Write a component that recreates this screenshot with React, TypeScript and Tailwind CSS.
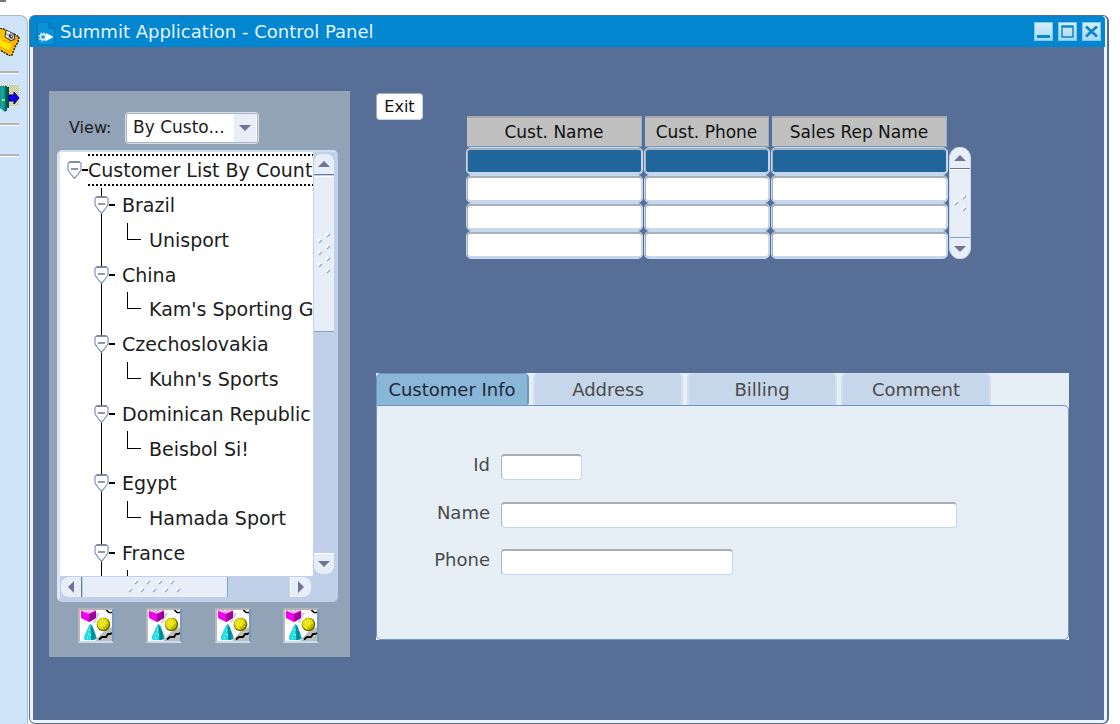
import { useState } from "react";

type Country = { name: string; customer: string };

const COUNTRIES: Country[] = [
  { name: "Brazil", customer: "Unisport" },
  { name: "China", customer: "Kam's Sporting G" },
  { name: "Czechoslovakia", customer: "Kuhn's Sports" },
  { name: "Dominican Republic", customer: "Beisbol Si!" },
  { name: "Egypt", customer: "Hamada Sport" },
  { name: "France", customer: "" },
];

const COLUMNS = ["Cust. Name", "Cust. Phone", "Sales Rep Name"];
const TABS = ["Customer Info", "Address", "Billing", "Comment"];

function FloppyIcon() {
  return (
    <svg width="20" height="28" viewBox="0 0 20 28" aria-hidden="true">
      <path d="M0 0 6 2 19 9l-1 5-3 5-3 8-2 1L0 22z" fill="#ffc400" />
      <path d="M0 11 9 14l4 4-3 6L0 18z" fill="#ffe600" />
      <path d="M0 19 10 24l3-8M2 12l9 3M13 18l4-8" fill="none" stroke="#ff9d00" strokeWidth="1.500" />
      <path d="M0 0 6 2M14 6l5 3-1 5-3 5-3 8-2 1L0 22" fill="none" stroke="#241a00" strokeWidth="1.500" strokeDasharray="2 1" />
      <path d="m6 2 8 4 1 5-4 2-6-4z" fill="#bcbcbc" stroke="#333" strokeWidth="1" />
      <path d="m9 6 4 2-1 3-3-2z" fill="#333" />
      <path d="m7 4 3 1M6 8l2 1M11 8l1 1" stroke="#fff" strokeWidth="1.500" />
    </svg>
  );
}

function DoorIcon() {
  return (
    <svg width="20" height="30" viewBox="0 0 20 30" aria-hidden="true">
      <defs>
        <pattern id="dither" width="2" height="2" patternUnits="userSpaceOnUse">
          <rect width="2" height="2" fill="#e2e6c4" />
          <rect width="1" height="1" fill="#bfc28c" />
          <rect x="1" y="1" width="1" height="1" fill="#bfc28c" />
        </pattern>
      </defs>
      <rect x="0" y="1" width="19" height="21" fill="url(#dither)" />
      <path d="M7 3h2v21H7z" fill="#0d4a4a" />
      <path d="M0 2h6l1 2v22l-2 2-5-4z" fill="#12958f" />
      <path d="M5 2h2v25H5z" fill="#06605e" />
      <path d="M2 3v21" stroke="#2bb5ad" />
      <path d="M2 16h3" stroke="#8df070" strokeWidth="2" />
      <path d="M9 11h5V8l5 6-5 6v-3H9z" fill="#1200e8" stroke="#06006e" strokeWidth="1" />
    </svg>
  );
}

function AppIcon() {
  return (
    <svg width="18" height="23" viewBox="0 0 18 23" aria-hidden="true">
      <path d="M.5.500h11l6 6V22.500H.5z" fill="#0a93d6" stroke="#0673b4" />
      <path d="M11.500.500v6h6z" fill="#0286d0" stroke="#0673b4" />
      <circle cx="6" cy="15" r="2.600" fill="none" stroke="#d9f1fd" strokeWidth="1.600" />
      <circle cx="6" cy="15" r="3.900" fill="none" stroke="#d9f1fd" strokeWidth="1.400" strokeDasharray="1.500 1.560" />
      <path d="m9 11 7.500 4L9 19z" fill="#fff" />
    </svg>
  );
}

function ShapesIcon() {
  return (
    <svg width="32" height="31" viewBox="0 0 32 31" aria-hidden="true">
      <rect width="32" height="31" fill="#fff" />
      <path d="M15 31 23 22l9-5v14z" fill="#bdbdbd" />
      <path d="M16 3h4l-5 10-3-1 4-3z" fill="#d2d2d2" />
      <path d="M1 0h15v8l-7 4-8-4z" fill="#f000f0" />
      <path d="M1 0h15v1L9 4 1 1z" fill="#ff8cff" />
      <path d="M9 4 16 1v7l-7 4z" fill="#9c0098" />
      <path d="M3 .500h2M7 .500h2M11 .500h2M5 1.500h2M9 1.500h2" stroke="#fff" />
      <path d="M26 .500h1l2 2h3" fill="none" stroke="#000" strokeWidth="1.500" />
      <circle cx="23.500" cy="14.500" r="6.800" fill="#6b6800" />
      <circle cx="22.900" cy="13.900" r="5.800" fill="#e6e000" />
      <path d="M20 12h1M22 11h1M21 14h1M24 12h1M23 14h1M20 16h1" stroke="#fff" strokeWidth="1.200" />
      <path d="M25 17h2M23 18h2M26 15h2" stroke="#8d8900" />
      <path d="m10.500 14 2 2 4 11v2l-3 1H6l-2-1v-2l5-11z" fill="#059da5" />
      <path d="m10.500 14-2 3L4 27v2l2 1h5z" fill="#21dfe6" />
      <path d="M11.500 18v3M13 21v8" stroke="#00717a" />
      <path d="M9 20h1M8 24h1M10 25h1M7 28h1" stroke="#fff" />
      <path d="M19 29.500 22 27h4l2-3h2l2-1" fill="none" stroke="#000" strokeWidth="1.800" />
    </svg>
  );
}

function NodeHandle() {
  return (
    <svg width="15" height="18" viewBox="0 0 15 18" className="shrink-0" aria-hidden="true">
      <path d="M2.500 1h10l1.500 1.500v6.500L10.500 14l-3 3.500-3-3.500L1 9V2.500z" fill="#fff" stroke="#7f93bd" strokeWidth="1.200" />
      <path d="M2.500 1h10M4 8h7" stroke="#73738c" strokeWidth="1.300" fill="none" />
    </svg>
  );
}

function Arrow({ dir }: { dir: "up" | "down" | "left" | "right" }) {
  const shapes = {
    up: "M0 9 6 3l6 6z",
    down: "M0 3h12L6 9z",
    left: "M9 0v12L3 6z",
    right: "M3 0v12l6-6z",
  };
  return (
    <svg width="12" height="12" viewBox="0 0 12 12" aria-hidden="true">
      <path d={shapes[dir]} fill="#717594" />
    </svg>
  );
}

function Grip({ points, width, height }: { points: [number, number][]; width: number; height: number }) {
  return (
    <svg width={width} height={height} viewBox={`0 0 ${width} ${height}`} aria-hidden="true">
      {points.map(([x, y]) => (
        <g key={`${x}-${y}`}>
          <path d={`M${x} ${y + 2.5} l2.5 -2.5`} stroke="#fff" strokeWidth="2.500" />
          <path d={`M${x + 1} ${y + 4} l3 -3`} stroke="#8aabd0" strokeWidth="1.200" />
        </g>
      ))}
    </svg>
  );
}

const TREE_GRIP: [number, number][] = [
  [8, 0], [0, 6], [8, 12], [0, 18], [8, 24], [0, 30], [8, 36],
];
const TREE_GRIP_WIDE: [number, number][] = [
  [6, 0], [18, 0], [30, 0], [42, 0], [0, 8], [12, 8], [24, 8], [36, 8], [48, 8],
];
const TABLE_GRIP: [number, number][] = [[8, 0], [0, 6], [8, 12]];

function Toolbar() {
  return (
    <nav aria-label="Toolbar" className="flex w-7 shrink-0 flex-col rounded-tr-lg border-t border-r border-[#a9bacb] bg-[#cfe4f8] pt-3">
      <button type="button" aria-label="Save" className="h-7 w-5">
        <FloppyIcon />
      </button>
      <hr className="mt-[15px] h-[3px] w-[19px] border-t-2 border-[#b4b4b4] bg-white" />
      <button type="button" aria-label="Exit form" className="mt-[10px] h-[30px] w-5">
        <DoorIcon />
      </button>
      <hr className="mt-[9px] h-[3px] w-[19px] border-t-2 border-[#b4b4b4] bg-white" />
      <hr className="mt-7 h-[3px] w-[19px] border-t-2 border-[#b4b4b4] bg-white" />
    </nav>
  );
}

function TitleBar() {
  const button = "flex h-[19px] w-[19px] items-center justify-center border border-[#7cc8f0] bg-linear-to-b from-[#d4effc] to-[#a5d9f5]";
  return (
    <header className="mr-[2px] flex h-[31px] items-center rounded-t-[4px] bg-[#0286d0] pr-1 pl-[7px]">
      <span className="pt-1">
        <AppIcon />
      </span>
      <h1 className="ml-[5px] flex-1 text-[18px] leading-6 text-[#e4f4fd]">Summit Application - Control Panel</h1>
      <div className="flex gap-[5px]">
        <button type="button" aria-label="Minimize" className={button}>
          <svg width="13" height="13" viewBox="0 0 13 13"><path d="M0 11.500h13" stroke="#0d86c8" strokeWidth="3" /></svg>
        </button>
        <button type="button" aria-label="Maximize" className={button}>
          <svg width="13" height="13" viewBox="0 0 13 13"><path d="M1 1h11v11H1zM1 2h11" fill="none" stroke="#0d86c8" strokeWidth="1.500" /></svg>
        </button>
        <button type="button" aria-label="Close" className={button}>
          <svg width="13" height="13" viewBox="0 0 13 13"><path d="m1 1.500 11 10m0-10-11 10" stroke="#0d86c8" strokeWidth="2.800" /></svg>
        </button>
      </div>
    </header>
  );
}

function CustomerTree() {
  return (
    <div className="mt-[6px] mr-3 ml-2 rounded-[5px] border-t-2 border-r border-b-4 border-l-[3px] border-[#bfd0e8] border-t-[#cfdff2] border-l-[#dce7f5] bg-[#bfd0e8]">
      <div className="flex h-[424px]">
        <div className="min-w-0 flex-1 overflow-hidden bg-white pt-px">
          <ul role="tree" className="grid h-[452px] grid-rows-[repeat(13,1fr)] text-[19px] whitespace-nowrap text-[#1c1c1c]">
            <li role="treeitem" className="flex min-w-0 items-center pl-[7px]">
              <NodeHandle />
              <span className="w-[6px] shrink-0 border-t-2 border-black" />
              <span className="flex-1 border-y-2 border-dotted border-black leading-7">Customer List By Count</span>
            </li>
            {COUNTRIES.map((country) => (
              <li key={country.name} role="treeitem" className="row-span-2 grid grid-rows-2">
                <div className="flex">
                  <div className="relative ml-[34px] flex w-[28px] items-center">
                    <span className="absolute top-0 left-[7px] h-[200%] w-0 border-l border-black" />
                    <span className="relative flex items-center">
                      <NodeHandle />
                      <span className="w-[6px] border-t-2 border-black" />
                    </span>
                  </div>
                  <span className="self-center leading-7">{country.name}</span>
                </div>
                <div className="flex pl-[67px]">
                  <span className="h-1/2 w-[14px] border-b border-l border-black" />
                  <span className="ml-2 self-center leading-7">{country.customer}</span>
                </div>
              </li>
            ))}
          </ul>
        </div>
        <div className="flex w-[24px] flex-col pt-[2px] pr-[3px] pl-[1px]">
          <button type="button" aria-label="Scroll up" className="flex h-[21px] items-center justify-center rounded-t-lg border-b border-[#717594] bg-[#e7eef7]">
            <Arrow dir="up" />
          </button>
          <div className="mt-px flex h-[156px] items-center justify-center border-t border-b border-t-white border-b-[#7fa3cc] bg-[#e7eef7]">
            <Grip points={TREE_GRIP} width={13} height={42} />
          </div>
          <button type="button" aria-label="Scroll down" className="mt-auto mb-[2px] flex h-[21px] items-center justify-center rounded-b-lg border-t border-white bg-[#e7eef7]">
            <Arrow dir="down" />
          </button>
        </div>
      </div>
      <div className="flex h-[22px] pt-px pr-[26px] pb-px pl-px">
        <button type="button" aria-label="Scroll left" className="flex w-[21px] items-center justify-center rounded-l-lg border-r border-[#717594] bg-[#e7eef7]">
          <Arrow dir="left" />
        </button>
        <div className="ml-px flex w-[145px] items-center justify-center border-r border-[#7fa3cc] bg-[#e7eef7]">
          <Grip points={TREE_GRIP_WIDE} width={54} height={14} />
        </div>
        <button type="button" aria-label="Scroll right" className="ml-auto flex w-[21px] items-center justify-center rounded-r-lg border-l border-white bg-[#e7eef7]">
          <Arrow dir="right" />
        </button>
      </div>
    </div>
  );
}

function Sidebar() {
  return (
    <aside className="w-[301px] shrink-0 bg-[#92a3b8] pt-[21px] pb-[14px]">
      <div className="flex items-center pl-5">
        <label htmlFor="view" className="w-14 text-[16px] text-[#1c1c1c]">View:</label>
        <div className="relative">
          <select
            id="view"
            className="h-8 w-[134px] appearance-none rounded border-2 border-[#aeb3ba] bg-white pl-[6px] text-[17px] text-[#1c1c1c] outline-1 -outline-offset-1 outline-[#cfe0f2]"
          >
            <option>By Custo...</option>
          </select>
          <span className="pointer-events-none absolute top-[2px] right-[3px] bottom-[2px] flex w-[22px] items-center justify-center bg-[#e7eef7]">
            <Arrow dir="down" />
          </span>
        </div>
      </div>
      <CustomerTree />
      <div className="mt-[6px] flex justify-between pr-[31px] pl-[29px]">
        {[1, 2, 3, 4].map((n) => (
          <button
            key={n}
            type="button"
            aria-label={`Action ${n}`}
            className="h-[35px] w-[36px] border-2 border-t-[#b3b3b3] border-r-[#7899bf] border-b-[#c9dbef] border-l-[#b8b8b8]"
          >
            <ShapesIcon />
          </button>
        ))}
      </div>
    </aside>
  );
}

function CustomerTable() {
  return (
    <div className="flex items-end">
      <table className="border-separate border-spacing-0">
        <thead>
          <tr>
            {COLUMNS.map((column, i) => (
              <th
                key={column}
                scope="col"
                className={`${i === 1 ? "w-[127px]" : "w-[178px]"} h-[31px] p-0 pr-[2px] pl-px text-[17px] leading-7 font-normal whitespace-nowrap text-[#111]`}
              >
                <div className="border-t-2 border-r border-b border-t-[#a8a8a8] border-r-[#8fb0d4] border-b-[#7899bf] bg-[#c0c0c0]">{column}</div>
              </th>
            ))}
          </tr>
        </thead>
        <tbody>
          {[0, 1, 2, 3].map((row) => (
            <tr key={row}>
              {COLUMNS.map((column) => (
                <td key={column} className="h-7 p-0">
                  <div className="mr-px h-7 rounded-[5px] border border-[#c6d8ee]">
                    <input
                      aria-label={`${column}, row ${row + 1}`}
                      readOnly
                      className={`${row === 0 ? "bg-[#20669c]" : "bg-white"} block h-[26px] w-full rounded border-t-2 border-r border-b-2 border-l border-t-[#abb1ba] border-r-[#c6d8ee] border-b-[#c6d8ee] border-l-[#abb1ba] outline-none`}
                    />
                  </div>
                </td>
              ))}
            </tr>
          ))}
        </tbody>
      </table>
      <div className="flex h-[112px] w-[22px] flex-col rounded-full border-r border-l border-[#c6d8ee] bg-[#e7eef7]">
        <button type="button" aria-label="Previous record" className="flex h-[22px] items-center justify-center border-b border-[#717594]">
          <Arrow dir="up" />
        </button>
        <div className="flex flex-1 items-center justify-center border-t border-white">
          <Grip points={TABLE_GRIP} width={13} height={18} />
        </div>
        <button type="button" aria-label="Next record" className="flex h-[22px] items-center justify-center border-t border-[#7fa3cc]">
          <Arrow dir="down" />
        </button>
      </div>
    </div>
  );
}

function Field({ id, label, width }: { id: string; label: string; width: string }) {
  return (
    <div className="flex">
      <label htmlFor={id} className="w-[113px] text-right text-[18px] leading-[22px] text-[#4a4a4a]">{label}</label>
      <input
        id={id}
        className={`${width} ml-[11px] h-[26px] rounded border border-t-2 border-[#c3d6ec] border-t-[#a9adb4] border-l-[#a9b4c4] bg-white px-1 outline-none`}
      />
    </div>
  );
}

function CustomerTabs() {
  const [active, setActive] = useState(0);
  return (
    <section className="bg-[#e7eff6]">
      <div role="tablist" className="flex h-8 gap-1">
        {TABS.map((tab, i) => (
          <button
            key={tab}
            type="button"
            role="tab"
            aria-selected={i === active}
            onClick={() => setActive(i)}
            className={
              i === active
                ? "w-[153px] rounded-t-[5px] rounded-br-[3px] border-t border-r-2 border-l border-[#6f96bf] bg-[#8ab6d8] text-[18px] leading-[30px] text-[#1c2a38]"
                : "w-[150px] rounded-t-[5px] border-x-2 border-t border-[#d2e0f1] bg-[#c7d7eb] text-[18px] leading-[30px] text-[#4a4a4a]"
            }
          >
            {tab}
          </button>
        ))}
      </div>
      <div role="tabpanel" className="flex flex-col rounded-[5px] rounded-tl-none border border-[#6f96bf] pt-[48px] pb-[64px]">
        <Field id="cust-id" label="Id" width="w-[81px]" />
        <div className="mt-[22px]">
          <Field id="cust-name" label="Name" width="w-[456px]" />
        </div>
        <div className="mt-[21px]">
          <Field id="cust-phone" label="Phone" width="w-[232px]" />
        </div>
      </div>
    </section>
  );
}

export default function App() {
  return (
    <div className="flex min-h-screen flex-col bg-white font-['DejaVu_Sans',sans-serif]">
      <div className="h-[15px]">
        <div className="h-[2px] w-[6px] bg-[#777]" />
      </div>
      <div className="flex flex-1">
        <Toolbar />
        <main className="mr-[11px] ml-px flex min-w-0 flex-1 flex-col rounded-md border border-r-2 border-[#54709a] bg-[#f0f4f9]">
          <TitleBar />
          <div className="mx-[3px] mb-[3px] flex flex-1 items-start bg-[#576e97] pt-[44px] pr-[35px] pb-[61px] pl-4">
            <Sidebar />
            <div className="ml-[26px] min-w-0 flex-1">
              <div className="flex h-[282px] items-start pt-[2px]">
                <button
                  type="button"
                  className="h-[27px] w-[47px] rounded border border-[#c3d6ec] border-t-[#a9adb4] border-l-[#a9adb4] bg-white text-[16px] leading-6 text-[#111]"
                >
                  Exit
                </button>
                <div className="mt-[23px] ml-[43px]">
                  <CustomerTable />
                </div>
              </div>
              <CustomerTabs />
            </div>
          </div>
        </main>
      </div>
    </div>
  );
}
